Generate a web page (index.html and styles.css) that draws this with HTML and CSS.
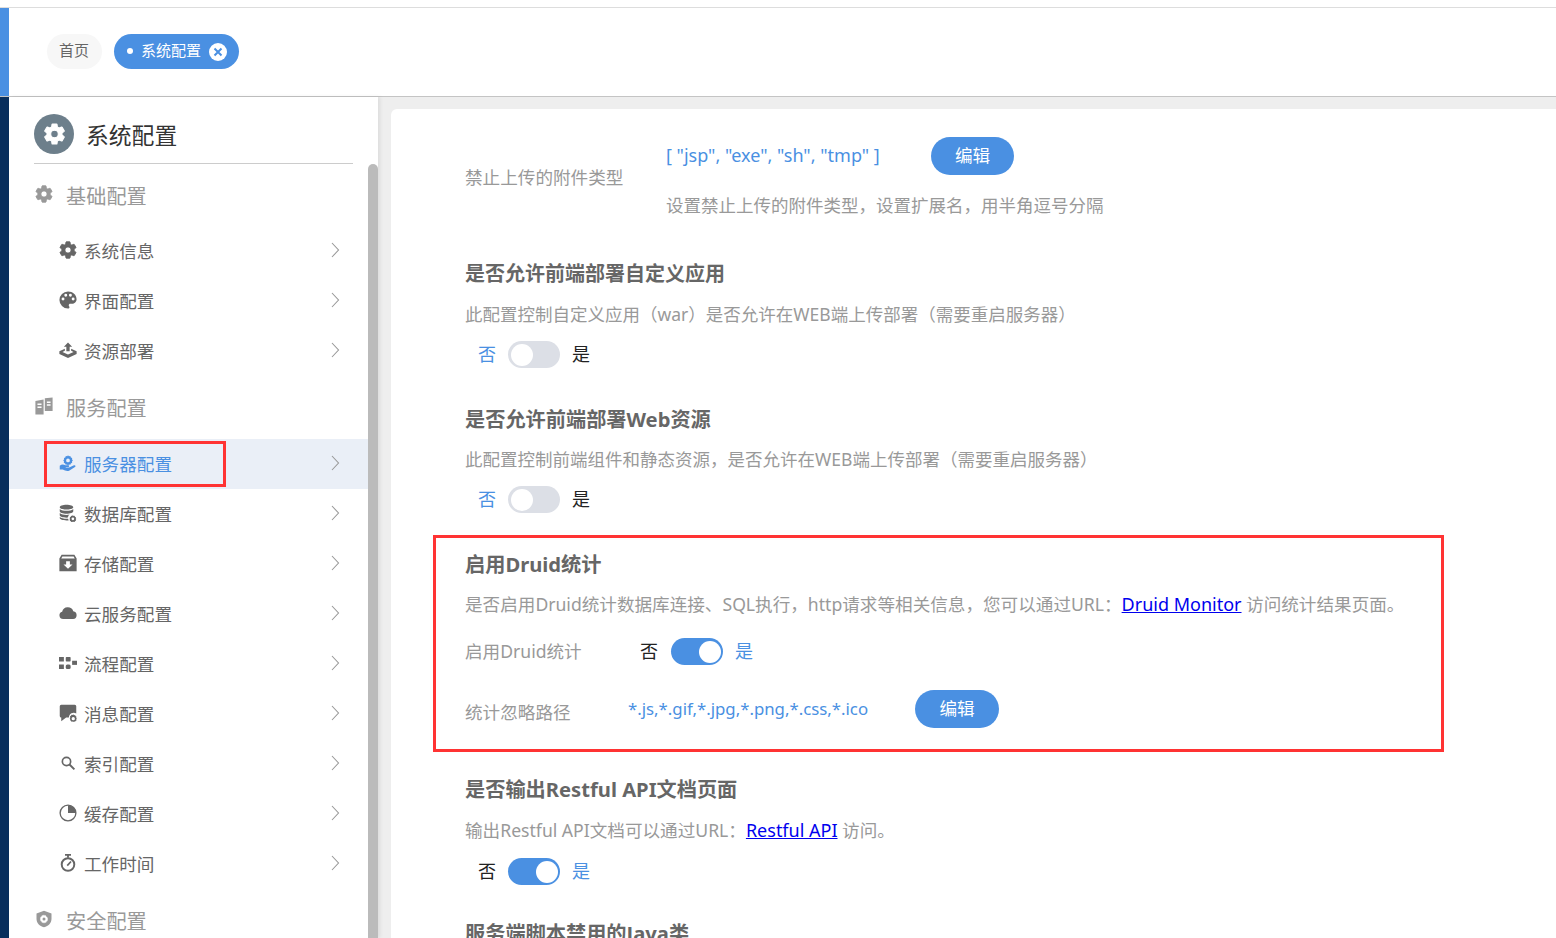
FILE: index.html
```html
<!DOCTYPE html>
<html lang="zh-CN">
<head>
<meta charset="utf-8">
<title>系统配置</title>
<link rel="stylesheet" href="styles.css">
</head>
<body>
<svg class="defs" aria-hidden="true">
  <symbol id="i-gear" viewBox="2 1.500 20 21"><path stroke="currentColor" stroke-width="1" d="M19.14 12.94c.04-.3.06-.61.06-.94 0-.32-.02-.64-.07-.94l2.03-1.58a.49.49 0 0 0 .12-.61l-1.92-3.32a.488.488 0 0 0-.59-.22l-2.39.96c-.5-.38-1.03-.7-1.62-.94l-.36-2.54a.484.484 0 0 0-.48-.41h-3.84c-.24 0-.43.17-.47.41l-.36 2.54c-.59.24-1.13.57-1.62.94l-2.39-.96c-.22-.08-.47 0-.59.22L2.74 8.87c-.12.21-.08.47.12.61l2.03 1.58c-.05.3-.09.63-.09.94s.02.64.07.94l-2.03 1.58a.49.49 0 0 0-.12.61l1.92 3.32c.12.22.37.29.59.22l2.39-.96c.5.38 1.03.7 1.62.94l.36 2.54c.05.24.24.41.48.41h3.84c.24 0 .44-.17.47-.41l.36-2.54c.59-.24 1.13-.56 1.62-.94l2.39.96c.22.08.47 0 .59-.22l1.92-3.32c.12-.22.07-.47-.12-.61l-2.01-1.58zM12 15.6c-1.98 0-3.6-1.62-3.6-3.6s1.62-3.6 3.6-3.6 3.6 1.62 3.6 3.6-1.62 3.6-3.6 3.6z"/></symbol>
  <symbol id="i-palette" viewBox="1.500 1.500 21 21"><path d="M12 2a10 10 0 0 0 0 20c1 0 1.700-.7 1.700-1.600 0-.45-.17-.82-.43-1.120-.26-.3-.42-.68-.42-1.100 0-.92.74-1.680 1.660-1.680H16.600c3 0 5.400-2.400 5.400-5.400C22 5.900 17.500 2 12 2zM6.200 12.600a1.700 1.700 0 1 1 0-3.400 1.700 1.700 0 0 1 0 3.400zm3.200-4.400a1.700 1.700 0 1 1 0-3.400 1.700 1.700 0 0 1 0 3.400zm5.400 0a1.700 1.700 0 1 1 0-3.400 1.700 1.700 0 0 1 0 3.400zm3.200 4.400a1.700 1.700 0 1 1 0-3.400 1.700 1.700 0 0 1 0 3.400z"/></symbol>
  <symbol id="i-upload" viewBox="0 0 24 24"><path d="M12 2l5.500 5.500h-3.300v6.300h-4.400V7.500H6.500zM7.800 10.300v2.800L4.600 14.600 12 18l7.400-3.400-3.200-1.500v-2.800L23.500 13.800v3.600L12 22.500.5 17.400v-3.600z"/></symbol>
  <symbol id="i-servers" viewBox="1 1 22 22"><path fill-rule="evenodd" d="M1.500 6l10-2v18.500h-10zm2.500 3v1.800h5V9zm0 3.500v1.800h5v-1.800zM13 2.500l9.500-1V18H13zm2.500 4v1.800h4.500V6.500zm0 3.500v1.800h4.500V10z"/></symbol>
  <symbol id="i-handgear" viewBox="0 0 24 24"><path fill-rule="evenodd" d="M12 1.500l1.200 1.500 1.900-.3.700 1.800 1.800.7-.3 1.900 1.200 1.400-1.200 1.400.3 1.900-1.800.7-.7 1.800-1.900-.3-1.200 1.500-1.200-1.500-1.900.3-.7-1.800-1.800-.7.3-1.900L5.700 8.500l1.200-1.400-.3-1.900 1.800-.7.7-1.800 1.900.3zM12 6a2.500 2.500 0 1 0 0 5 2.500 2.500 0 0 0 0-5z"/><path d="M1 15.500c2.500-2 5-2 7.500-.5h4c1.500 0 1.500 2.200 0 2.200H9v.8h4.500l6.500-3c1.800-.7 2.800 1.200 1.300 2.200l-7.300 4.800c-2 1-4 .8-6 0l-3-1.200H1z"/></symbol>
  <symbol id="i-db" viewBox="0 0 24 24"><path d="M10 1c5 0 9 1.400 9 3.200S15 7.400 10 7.400 1 6 1 4.200 5 1 10 1zM1 6.500C3 8.400 6.500 9 10 9s7-.6 9-2.500v3.200C19 11.500 15 13 10 13s-9-1.500-9-3.300zm0 5.500c2 1.900 5.500 2.600 9 2.600 1.500 0 3-.1 4.300-.5-1.500 1-2.300 2.400-2.300 4-.6.1-1.300.1-2 .1-5 0-9-1.400-9-3.200zm0 5.200c2 1.700 6 2.500 11 2.300.2.800.6 1.500 1.100 2.100-1 .2-2 .3-3.100.3-5 0-9-1.300-9-3.100z"/><path fill-rule="evenodd" d="M18.500 14.500l.9 1.400 1.400-.3.500 1.300 1.300.7-.3 1.400.8 1-.8 1 .3 1.400-1.300.5-.5 1-1.400-.3-.9.400-.9-.4-1.400.3-.5-1-1.300-.5.3-1.400-.8-1 .8-1-.3-1.400 1.300-.7.5-1.300 1.400.3zm0 3.500a1.800 1.800 0 1 0 0 3.600 1.800 1.800 0 0 0 0-3.600z"/></symbol>
  <symbol id="i-archive" viewBox="0 0 24 24"><path fill-rule="evenodd" d="M3.500 1h17L23.500 6v17H.5V6zm1 2.200L3 6h18l-1.500-2.800zM9.500 9.500V14H6l6 5.500 6-5.500h-3.500V9.500z"/></symbol>
  <symbol id="i-cloud" viewBox="0 0 24 24"><path d="M5.500 20a5 5 0 0 1-1.300-9.800A7.800 7.800 0 0 1 19 9.500 5.300 5.300 0 0 1 18.800 20z"/></symbol>
  <symbol id="i-flow" viewBox="0 0 24 24"><rect x="0" y="4" width="6.500" height="6"/><rect x="9" y="4" width="6.500" height="6" rx="1"/><rect x="0" y="14" width="6.500" height="6"/><rect x="9" y="14" width="6.500" height="6" rx="2"/><rect x="17.500" y="9" width="6.500" height="5.500"/></symbol>
  <symbol id="i-msg" viewBox="0 0 24 24"><path d="M3 1h18a2 2 0 0 1 2 2v9.500a6.500 6.500 0 0 0-9.800 5.500H9.500L3 23v-5a2 2 0 0 1-2-2V3a2 2 0 0 1 2-2z"/><path fill-rule="evenodd" d="M19 13.500l.9 1.500 1.500-.3.600 1.400 1.300.8-.3 1.500.7 1.100-.7 1.100.3 1.500-1.300.5-.6.900-1.500-.3-.9.700-.9-.7-1.500.3-.6-1.300-1.300-.6.300-1.500-.8-1.100.8-1.100-.3-1.500 1.300-.8.600-1.400 1.500.3zm0 3.800a2.200 2.200 0 1 0 0 4.400 2.200 2.200 0 0 0 0-4.400z"/></symbol>
  <symbol id="i-search" viewBox="0 0 24 24"><circle cx="10" cy="10" r="5.500" fill="none" stroke="currentColor" stroke-width="2.200"/><path d="M14 14l6.500 6.500" stroke="currentColor" stroke-width="2.600" fill="none"/></symbol>
  <symbol id="i-pie" viewBox="0 0 24 24"><circle cx="12" cy="12" r="10.500" fill="none" stroke="currentColor" stroke-width="1.800"/><path d="M12 1.500a10.500 10.500 0 0 1 10.500 10.500H12z"/></symbol>
  <symbol id="i-timer" viewBox="0 0 24 24"><path d="M8 0h8v2.400h-2.800v2.600h-2.400V2.400H8z"/><circle cx="12" cy="14" r="8.400" fill="none" stroke="currentColor" stroke-width="2.600"/><path d="M11 15.500l5-5.500" stroke="currentColor" stroke-width="2.200" fill="none"/></symbol>
  <symbol id="i-shield" viewBox="2 0 20 24"><path fill-rule="evenodd" d="M12 1l10 3.500v7c0 5.500-4 9.800-10 11.500C6 21.300 2 17 2 11.500v-7zm0 5l-1 1.300-1.700-.2-.6 1.500-1.500.7.200 1.700-1 1 1 1.100-.2 1.600 1.500.7.600 1.500 1.700-.2 1 1.300 1-1.300 1.700.2.600-1.500 1.500-.7-.2-1.600 1-1.100-1-1-.2-1.700-1.500-.7-.6-1.500-1.700.2zm0 4a2 2 0 1 1 0 4 2 2 0 0 1 0-4z"/></symbol>
  <symbol id="i-chev" viewBox="0 0 9 16"><path d="M1 1l6.500 7L1 15" fill="none" stroke="currentColor" stroke-width="1.100"/></symbol>
</svg>

<div class="topline"></div>

<header class="topbar">
  <div class="rail rail-blue"></div>
  <nav class="tabs">
    <a class="tab">首页</a>
    <a class="tab tab-active">
      <span class="tab-dot"></span>
      <span class="tab-text">系统配置</span>
      <span class="tab-close">
        <svg viewBox="0 0 18 18" class="tab-x"><path d="M5.500 5.500l7 7M12.500 5.500l-7 7"/></svg>
      </span>
    </a>
  </nav>
</header>

<div class="main">
  <div class="rail rail-navy"></div>

  <aside class="sidebar">
    <div class="side-nav">
      <div class="side-title">
        <span class="side-badge"><svg class="ic-badge"><use href="#i-gear"/></svg></span>
        <span class="side-title-text">系统配置</span>
      </div>

      <div class="group"><svg class="ic"><use href="#i-gear"/></svg><span>基础配置</span></div>
      <a class="item"><svg class="ic"><use href="#i-gear"/></svg><span class="item-text">系统信息</span><svg class="chev"><use href="#i-chev"/></svg></a>
      <a class="item"><svg class="ic"><use href="#i-palette"/></svg><span class="item-text">界面配置</span><svg class="chev"><use href="#i-chev"/></svg></a>
      <a class="item"><svg class="ic"><use href="#i-upload"/></svg><span class="item-text">资源部署</span><svg class="chev"><use href="#i-chev"/></svg></a>

      <div class="group group-gap"><svg class="ic"><use href="#i-servers"/></svg><span>服务配置</span></div>
      <a class="item item-active"><svg class="ic"><use href="#i-handgear"/></svg><span class="item-text">服务器配置</span><svg class="chev"><use href="#i-chev"/></svg><span class="mark mark-item"></span></a>
      <a class="item"><svg class="ic"><use href="#i-db"/></svg><span class="item-text">数据库配置</span><svg class="chev"><use href="#i-chev"/></svg></a>
      <a class="item"><svg class="ic"><use href="#i-archive"/></svg><span class="item-text">存储配置</span><svg class="chev"><use href="#i-chev"/></svg></a>
      <a class="item"><svg class="ic"><use href="#i-cloud"/></svg><span class="item-text">云服务配置</span><svg class="chev"><use href="#i-chev"/></svg></a>
      <a class="item"><svg class="ic"><use href="#i-flow"/></svg><span class="item-text">流程配置</span><svg class="chev"><use href="#i-chev"/></svg></a>
      <a class="item"><svg class="ic"><use href="#i-msg"/></svg><span class="item-text">消息配置</span><svg class="chev"><use href="#i-chev"/></svg></a>
      <a class="item"><svg class="ic"><use href="#i-search"/></svg><span class="item-text">索引配置</span><svg class="chev"><use href="#i-chev"/></svg></a>
      <a class="item"><svg class="ic"><use href="#i-pie"/></svg><span class="item-text">缓存配置</span><svg class="chev"><use href="#i-chev"/></svg></a>
      <a class="item"><svg class="ic"><use href="#i-timer"/></svg><span class="item-text">工作时间</span><svg class="chev"><use href="#i-chev"/></svg></a>

      <div class="group group-gap"><svg class="ic ic-tall"><use href="#i-shield"/></svg><span>安全配置</span></div>
    </div>
    <div class="side-scroll"><div class="side-thumb"></div></div>
  </aside>

  <div class="stage">
    <main class="panel">
      <section class="cfg-first">
        <div class="cfg-label cfg-label-first">禁止上传的附件类型</div>
        <div class="cfg-body">
          <div class="cfg-value-row">
            <span class="value value-first">[ "jsp", "exe", "sh", "tmp" ]</span>
            <button class="btn">编辑</button>
          </div>
          <p class="help">设置禁止上传的附件类型，设置扩展名，用半角逗号分隔</p>
        </div>
      </section>

      <section class="sec sec-a">
        <h3 class="sec-title sec-title-cn">是否允许前端部署自定义应用</h3>
        <p class="desc desc-cn">此配置控制自定义应用（war）是否允许在WEB端上传部署（需要重启服务器）</p>
        <div class="sw-row">
          <span class="sw-text sw-on-text">否</span><span class="switch"><span class="knob"></span></span><span class="sw-text sw-off-text">是</span>
        </div>
      </section>

      <section class="sec">
        <h3 class="sec-title">是否允许前端部署Web资源</h3>
        <p class="desc desc-cn">此配置控制前端组件和静态资源，是否允许在WEB端上传部署（需要重启服务器）</p>
        <div class="sw-row">
          <span class="sw-text sw-on-text">否</span><span class="switch"><span class="knob"></span></span><span class="sw-text sw-off-text">是</span>
        </div>
      </section>

      <section class="sec sec-druid">
        <span class="mark mark-druid"></span>
        <h3 class="sec-title">启用Druid统计</h3>
        <p class="desc">是否启用Druid统计数据库连接、SQL执行，http请求等相关信息，您可以通过URL：<a class="link" href="#">Druid Monitor</a> 访问统计结果页面。</p>
        <div class="field-row field-switch">
          <span class="field-label field-label-switch">启用Druid统计</span>
          <span class="sw-text sw-off-text">否</span><span class="switch switch-on switch-field"><span class="knob"></span></span><span class="sw-text sw-on-text">是</span>
        </div>
        <div class="field-row field-path">
          <span class="field-label field-label-path">统计忽略路径</span>
          <span class="value value-path">*.js,*.gif,*.jpg,*.png,*.css,*.ico</span>
          <button class="btn btn-path">编辑</button>
        </div>
      </section>

      <section class="sec sec-rest">
        <h3 class="sec-title">是否输出Restful API文档页面</h3>
        <p class="desc desc-rest">输出Restful API文档可以通过URL：<a class="link" href="#">Restful API</a> 访问。</p>
        <div class="sw-row sw-row-rest">
          <span class="sw-text sw-off-text">否</span><span class="switch switch-on"><span class="knob"></span></span><span class="sw-text sw-on-text">是</span>
        </div>
      </section>

      <section class="sec sec-last">
        <h3 class="sec-title">服务端脚本禁用的Java类</h3>
      </section>
    </main>
  </div>
</div>
</body>
</html>
```

FILE: styles.css
```css
* { box-sizing: border-box; }
html, body { height: 100%; }
body {
  margin: 0;
  overflow: hidden;
  background: #fff;
  color: #666;
  font-family: "Noto Sans", "Noto Sans CJK SC", sans-serif;
  font-size: 17.6px;
}
p, h3 { margin: 0; }
.defs { position: absolute; width: 0; height: 0; }

.topline { height: 8px; border-bottom: 1px solid #ddd; background: #fff; }

.topbar {
  display: flex;
  height: 89px;
  border-bottom: 1px solid #c4c4c4;
}
.rail { width: 9px; flex: none; }
.rail-blue { background: #4a90e2; }
.rail-navy { background: #082e5c; }

.tabs { display: flex; align-items: center; gap: 12px; padding-left: 38px; margin-top: -1px; }
.tab {
  display: flex;
  align-items: center;
  height: 35px;
  border-radius: 18px;
  padding: 0 13px 2px 12px;
  background: #f7f7f7;
  color: #666;
  font-size: 15px;
  line-height: 33px;
  white-space: nowrap;
}
.tab-active {
  width: 125px;
  padding: 0 13px 0 13px;
  background: #4a90e2;
  color: #fff;
}
.tab-text { margin-bottom: 2px; }
.tab-dot { width: 6px; height: 6px; border-radius: 50%; background: #fff; margin-right: 8px; flex: none; margin-bottom: 2px; }
.tab-close {
  width: 18px;
  height: 18px;
  margin-left: 8px;
  border-radius: 50%;
  background: #fff;
  flex: none;
}
.tab-x { display: block; width: 18px; height: 18px; }
.tab-x path { fill: none; stroke: #4a90e2; stroke-width: 2; }

.main { display: flex; height: 841px; }

.sidebar {
  display: flex;
  width: 369px;
  flex: none;
  background: #fff;
  box-shadow: 2px 0 4px rgba(0, 0, 0, .08);
  position: relative;
  z-index: 1;
}
.side-nav { width: 359px; flex: none; }
.side-scroll { width: 10px; padding-top: 67px; }
.side-thumb { height: 100%; background: #bbb; border-radius: 5px 5px 0 0; }

.side-title {
  display: flex;
  align-items: center;
  gap: 12px;
  height: 67px;
  padding-top: 8px;
  margin: 0 15px 0 25px;
  border-bottom: 1px solid #ccc;
  color: #333;
  font-size: 22.8px;
}
.side-badge {
  display: flex;
  align-items: center;
  justify-content: center;
  width: 40px;
  height: 40px;
  border-radius: 50%;
  background: #6d7f8b;
}
.ic-badge { width: 21px; height: 22px; fill: #fff; color: #fff; }

.group {
  display: flex;
  align-items: center;
  height: 62px;
  padding-left: 26px;
  color: #999;
  font-size: 20.2px;
}
.group .ic { margin-right: 13px; color: #999; fill: #999; margin-bottom: 3px; }
.group-gap { height: 63px; }
.ic-tall { height: 22px; }

.ic { width: 18px; height: 18px; flex: none; fill: #666; color: #666; margin-bottom: 2px; }

.item {
  position: relative;
  display: flex;
  align-items: center;
  height: 50px;
  padding: 0 28px 0 50px;
  color: #666;
}
.item-text { flex: 1; margin-left: 7px; margin-bottom: 1px; }
.chev { width: 9px; height: 16px; color: #999; flex: none; margin-bottom: 2px; }
.item-active { background: #eaeff7; color: #4a90e2; }
.item-active .ic { fill: #4a90e2; color: #4a90e2; }

.mark { position: absolute; border: 3px solid #f33; pointer-events: none; }
.mark-item { left: 35px; top: 2px; width: 182px; height: 46px; }
.mark-druid { left: -32px; top: -14px; width: 1011px; height: 217px; }

.stage {
  flex: 1;
  min-width: 0;
  padding: 12px 0 0 13px;
  background: #eee;
}
.panel {
  height: 100%;
  padding: 28px 0 0 74px;
  background: #fff;
  border-radius: 6px 0 0 0;
  overflow: hidden;
}

.cfg-first { display: flex; align-items: center; }
.cfg-label { color: #999; }
.cfg-label-first { width: 201px; flex: none; margin-top: -5px; }
.cfg-value-row { display: flex; align-items: center; gap: 50px; }
.help { margin-top: 15px; line-height: 30px; color: #999; font-size: 17.5px; }

.value { color: #4a90e2; white-space: nowrap; margin-bottom: 2px; }
.value-first { width: 215px; flex: none; font-size: 18px; }
.btn {
  height: 38px;
  width: 83px;
  border: 0;
  border-radius: 19px;
  background: #4a90e2;
  color: #fff;
  font-family: inherit;
  font-size: 17.6px;
  padding: 0 0 3px;
}

.sec { position: relative; margin-top: 36px; }
.sec-a { margin-top: 39px; }
.sec-title { font-size: 20.2px; font-weight: 700; line-height: 30px; color: #666; }
.sec-title-cn { font-size: 20px; }
.desc { margin-top: 10px; line-height: 30px; color: #999; white-space: nowrap; }
.desc-cn { font-size: 17.5px; }
.link { color: #00e; text-decoration: underline; font-size: 18px; }

.sw-row { display: flex; align-items: center; gap: 12px; height: 27px; margin-top: 12px; padding-left: 13px; font-size: 18px; }
.sw-text { margin-bottom: 3px; }
.sw-on-text { color: #4a90e2; }
.sw-off-text { color: #222; }
.switch {
  display: flex;
  align-items: center;
  width: 52px;
  height: 27px;
  padding: 0 2px 0 3px;
  border-radius: 14px;
  background: #dcdfe6;
  flex: none;
}
.switch-on { background: #4a90e2; justify-content: flex-end; }
.switch-field { margin-left: 1px; }
.knob { width: 22px; height: 22px; border-radius: 50%; background: #fff; }

.field-row { display: flex; align-items: center; }
.field-switch { gap: 12px; height: 27px; margin-top: 19px; font-size: 18px; }
.field-label { color: #999; font-size: 17.6px; }
.field-label-switch { width: 163px; flex: none; margin-bottom: 2px; }
.field-path { margin-top: 25px; height: 38px; }
.field-label-path { width: 163px; flex: none; margin-top: 4px; }
.value-path { width: 287px; flex: none; font-size: 16.8px; }
.btn-path { width: 84px; }

.sec-rest { margin-top: 46px; }
.desc-rest { margin-top: 11px; }
.sw-row-rest { margin-top: 13px; }
.sec-last { margin-top: 33px; }
```
